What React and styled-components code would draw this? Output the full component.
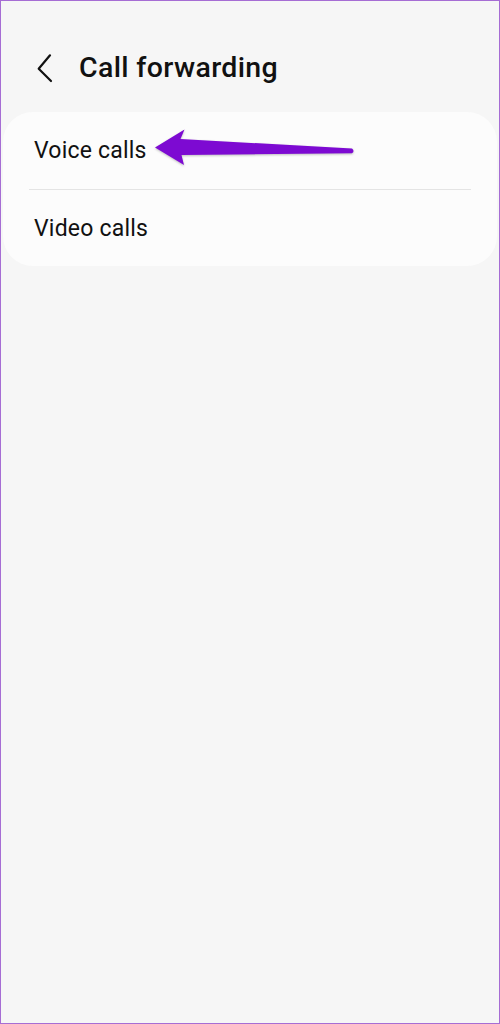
import React from "react";
import styled, { createGlobalStyle } from "styled-components";

const GlobalStyle = createGlobalStyle`
  html, body {
    margin: 0;
    padding: 0;
    background: #f6f6f6;
  }
  * {
    box-sizing: border-box;
  }
`;

const Screen = styled.div`
  width: 500px;
  height: 1024px;
  border: 1px solid #a66dd4;
  background: #f6f6f6;
  font-family: Roboto, "Noto Sans", sans-serif;
  color: #111;
`;

const Header = styled.div`
  height: 111px;
  padding: 22px 0 0 35px;
  display: flex;
  align-items: center;
`;

const BackIcon = styled.svg`
  width: 18px;
  height: 30px;
  flex-shrink: 0;
`;

const Title = styled.h1`
  margin: 0 0 0 25px;
  font-size: 28.5px;
  font-weight: 500;
  letter-spacing: 0.35px;
`;

const Card = styled.div`
  position: relative;
  margin: 0 2px;
  background: #fcfcfc;
  border-radius: 30px;
`;

const Row = styled.div`
  height: ${(p) => p.$h}px;
  display: flex;
  align-items: center;
  padding-left: 31px;
  font-size: 23px;
  font-weight: 400;
  letter-spacing: 0.2px;
`;

const Divider = styled.div`
  height: 1px;
  margin: 0 26px;
  background: #e4e4e4;
`;

const Pointer = styled.svg`
  position: absolute;
  left: 147px;
  top: 13px;
  width: 210px;
  height: 45px;
  filter: drop-shadow(0 1px 1px rgba(0, 0, 0, 0.25));
`;

export default function App() {
  return (
    <>
      <GlobalStyle />
      <Screen>
        <Header>
          <BackIcon viewBox="0 0 18 30">
            <path
              d="M14 2.3 L2.7 15.7 L15 28"
              fill="none"
              stroke="#111"
              strokeWidth="2.2"
              strokeLinecap="round"
              strokeLinejoin="round"
            />
          </BackIcon>
          <Title>Call forwarding</Title>
        </Header>
        <Card>
          <Row $h={77}>Voice calls</Row>
          <Divider />
          <Row $h={76}>Video calls</Row>
          <Pointer viewBox="0 0 210 45">
            <path
              d="M5 22.5 L34.5 4.5 L30.5 14 L202 23.5 Q205 26 202 28.3 L31.5 30 L34 40 Z"
              fill="#7d0ad2"
            />
          </Pointer>
        </Card>
      </Screen>
    </>
  );
}
